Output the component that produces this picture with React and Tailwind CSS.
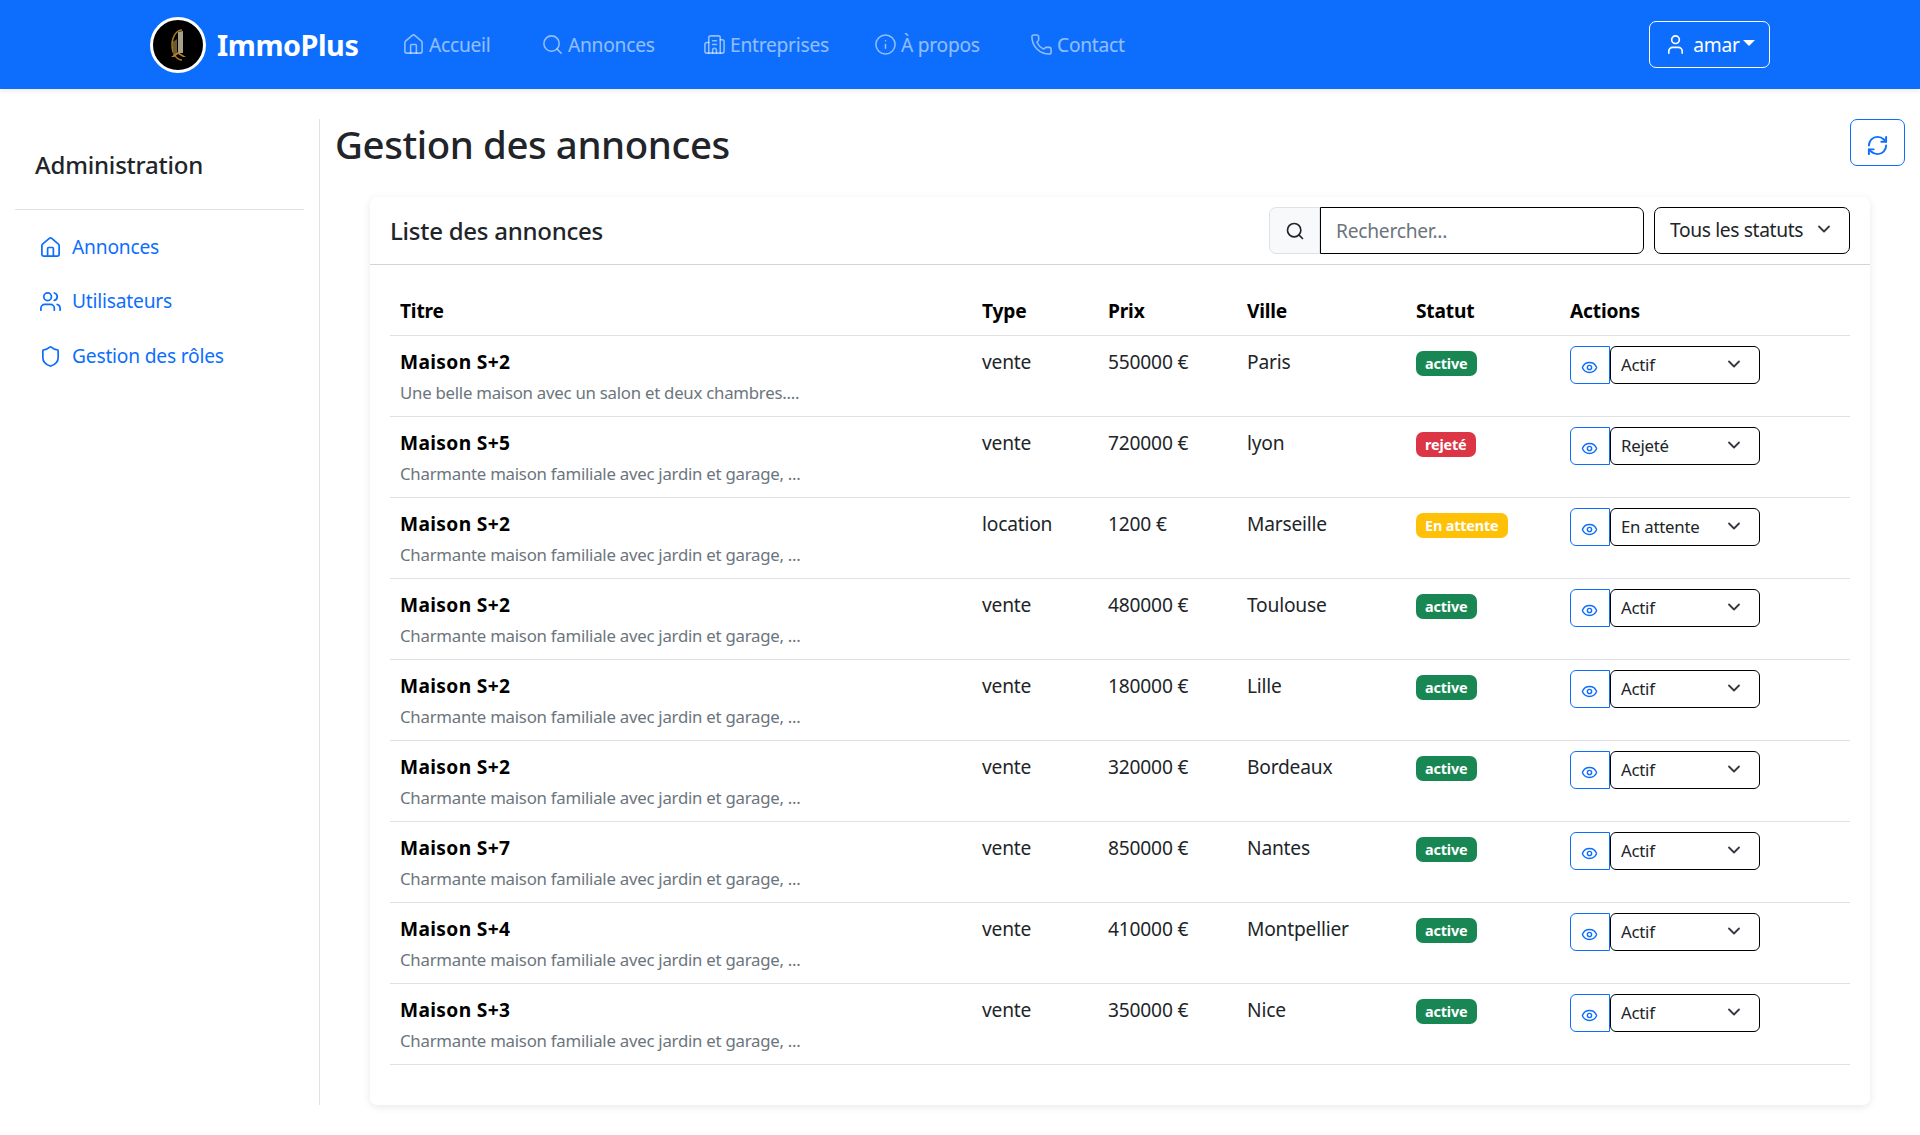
import { Home, Search, Building2, Info, Phone, User, RefreshCw, Users, Shield, Eye, ChevronDown } from "lucide-react";

const font = { fontFamily: '"Noto Sans", sans-serif' };

const navLinks = [
  { label: "Accueil", Icon: Home, cls: "w-[139px]" },
  { label: "Annonces", Icon: Search, cls: "w-[162px]" },
  { label: "Entreprises", Icon: Building2, cls: "w-[171px]" },
  { label: "À propos", Icon: Info, cls: "w-[156px]" },
  { label: "Contact", Icon: Phone, cls: "w-[130px]" },
];

const longDesc = "Charmante maison familiale avec jardin et garage, ...";

const rows = [
  { title: "Maison S+2", desc: "Une belle maison avec un salon et deux chambres....", type: "vente", price: "550000 €", city: "Paris", status: "active", action: "Actif" },
  { title: "Maison S+5", desc: longDesc, type: "vente", price: "720000 €", city: "lyon", status: "rejeté", action: "Rejeté" },
  { title: "Maison S+2", desc: longDesc, type: "location", price: "1200 €", city: "Marseille", status: "En attente", action: "En attente" },
  { title: "Maison S+2", desc: longDesc, type: "vente", price: "480000 €", city: "Toulouse", status: "active", action: "Actif" },
  { title: "Maison S+2", desc: longDesc, type: "vente", price: "180000 €", city: "Lille", status: "active", action: "Actif" },
  { title: "Maison S+2", desc: longDesc, type: "vente", price: "320000 €", city: "Bordeaux", status: "active", action: "Actif" },
  { title: "Maison S+7", desc: longDesc, type: "vente", price: "850000 €", city: "Nantes", status: "active", action: "Actif" },
  { title: "Maison S+4", desc: longDesc, type: "vente", price: "410000 €", city: "Montpellier", status: "active", action: "Actif" },
  { title: "Maison S+3", desc: longDesc, type: "vente", price: "350000 €", city: "Nice", status: "active", action: "Actif" },
];

function badgeClass(status) {
  if (status === "rejeté") return "bg-[#dc3545]";
  if (status === "En attente") return "bg-[#ffc107]";
  return "bg-[#198754]";
}

function Logo() {
  return (
    <svg width="56" height="56" viewBox="0 0 56 56" className="shrink-0">
      <circle cx="28" cy="28" r="26.5" fill="#000" stroke="#fff" strokeWidth="3" />
      <path d="M32 13 A10 15 0 1 0 32 43" fill="none" stroke="#a87a1e" strokeWidth="1.5" />
      <path d="M28 15 L33 14 L33 36 L28 36 Z" fill="#a9a08c" />
      <path d="M23 25 L27 22 L27 37 L23 37 Z" fill="#6e5a30" />
      <path d="M21 40 L28 35 L36 40 L33 40 L28 37 L24 40 Z" fill="#b8862b" />
    </svg>
  );
}

function Navbar() {
  return (
    <nav className="h-[89px] bg-[#0d6efd] flex items-center pl-[150px] pr-[150px] shadow-[0_2px_5px_rgba(0,0,0,0.08)]">
      <Logo />
      <span className="ml-[11px] w-[185px] text-[28.8px] font-bold text-white tracking-[-0.45px]">ImmoPlus</span>
      {navLinks.map(({ label, Icon, cls }) => (
        <a key={label} className={`${cls} flex items-center gap-[4px] text-[19.2px] text-white/55 tracking-[-0.25px]`}>
          <Icon size={23} strokeWidth={1.6} />
          <span className="pt-[2px]">{label}</span>
        </a>
      ))}
      <button className="ml-auto h-[47px] w-[121px] rounded-[7px] border border-white text-white text-[19.2px] flex items-center justify-center gap-[6px] tracking-[-0.2px]">
        <User size={23} strokeWidth={1.7} />
        <span className="pt-[2px]">amar</span>
        <span className="-ml-[3px] mt-[-3px] border-x-[6px] border-t-[6px] border-x-transparent border-t-white" />
      </button>
    </nav>
  );
}

function Sidebar() {
  const links = [
    { label: "Annonces", Icon: Home },
    { label: "Utilisateurs", Icon: Users },
    { label: "Gestion des rôles", Icon: Shield },
  ];
  return (
    <aside className="w-[320px] shrink-0 border-r border-[#dee2e6] px-[15px] pt-[28px]">
      <h2 className="pl-[20px] text-[24px] leading-[36px] font-medium text-[#212529] tracking-[-0.2px]">Administration</h2>
      <hr className="mt-[26px] border-[#dee2e6]" />
      <ul className="mt-[10px] flex flex-col">
        {links.map(({ label, Icon }) => (
          <li key={label} className="h-[54.5px] pl-[24px] flex items-center gap-[10px] text-[19.2px] text-[#0d6efd] tracking-[-0.2px]">
            <Icon size={23} strokeWidth={1.8} />
            {label}
          </li>
        ))}
      </ul>
    </aside>
  );
}

function Row({ row }) {
  return (
    <tr className="h-[81px] border-b border-[#dee2e6] align-top text-[19.2px] text-[#212529] tracking-[-0.2px]">
      <td className="px-[10px] pt-[11px]">
        <div className="font-bold text-black leading-[29px] tracking-[0.35px]">{row.title}</div>
        <div className="text-[16.8px] text-[#6c757d] leading-[25px] mt-[4px] tracking-[-0.25px]">{row.desc}</div>
      </td>
      <td className="px-[10px] pt-[11px] leading-[29px]">{row.type}</td>
      <td className="px-[10px] pt-[11px] leading-[29px]">{row.price}</td>
      <td className="px-[10px] pt-[11px] leading-[29px]">{row.city}</td>
      <td className="px-[10px] pt-[15px]">
        <span className={`${badgeClass(row.status)} flex w-fit h-[25px] px-[9px] rounded-[7px] text-white text-[14.4px] font-bold leading-[25px] tracking-[-0.15px]`}>
          {row.status}
        </span>
      </td>
      <td className="px-[10px] pt-[10px]">
        <div className="flex">
          <button className="w-[40px] h-[38px] flex items-center justify-center pt-[5px] pr-[1px] rounded-l-[6px] border border-[#0d6efd] text-[#0d6efd]">
            <Eye size={17} strokeWidth={2} />
          </button>
          <div className="relative w-[150px] h-[38px]">
            <select
              defaultValue={row.action}
              className="appearance-none w-full h-full rounded-[6px] border border-black bg-white pl-[10px] text-[16.8px] text-[#212529] tracking-[-0.25px]"
            >
              <option>{row.action}</option>
            </select>
            <ChevronDown size={20} strokeWidth={2.2} className="absolute right-[16px] top-[8px] text-[#343a40] pointer-events-none" />
          </div>
        </div>
      </td>
    </tr>
  );
}

function Listing() {
  return (
    <section className="ml-[50px] mt-[24px] w-[1500px] h-[908px] rounded-[7px] bg-white shadow-[0_2px_8px_rgba(0,0,0,0.09)]">
      <header className="h-[68px] border-b border-[#d3d6d9] pl-[20px] pr-[20px] flex items-center">
        <h3 className="text-[24px] font-medium text-[#212529] tracking-[-0.25px]">Liste des annonces</h3>
        <div className="ml-auto flex items-center">
          <span className="w-[51px] h-[47px] flex items-center justify-center rounded-l-[7px] border border-[#dee2e6] bg-[#f8f9fa] text-[#212529]">
            <Search size={20} strokeWidth={2} />
          </span>
          <input
            placeholder="Rechercher..."
            className="w-[324px] h-[47px] rounded-r-[7px] border border-black bg-white pl-[15px] text-[19.2px] tracking-[-0.25px] placeholder:text-[#6c757d] outline-none"
          />
          <div className="relative ml-[10px] w-[196px] h-[47px]">
            <select className="appearance-none w-full h-full rounded-[7px] border border-black bg-white pl-[15px] text-[19.2px] text-[#212529] tracking-[-0.35px]">
              <option>Tous les statuts</option>
            </select>
            <ChevronDown size={20} strokeWidth={2.2} className="absolute right-[16px] top-[12px] text-[#343a40] pointer-events-none" />
          </div>
        </div>
      </header>
      <div className="px-[20px] pt-[18px]">
        <table className="w-[1460px] table-fixed border-collapse">
          <colgroup>
            <col className="w-[582px]" />
            <col className="w-[126px]" />
            <col className="w-[139px]" />
            <col className="w-[169px]" />
            <col className="w-[154px]" />
            <col className="w-[290px]" />
          </colgroup>
          <thead>
            <tr className="h-[52px] border-b border-[#dee2e6] text-left text-[19.2px] font-bold text-black tracking-[-0.2px]">
              {["Titre", "Type", "Prix", "Ville", "Statut", "Actions"].map((h) => (
                <th key={h} className="px-[10px] pt-[6px]">{h}</th>
              ))}
            </tr>
          </thead>
          <tbody>
            {rows.map((row, i) => (
              <Row key={i} row={row} />
            ))}
          </tbody>
        </table>
      </div>
    </section>
  );
}

export default function App() {
  return (
    <div style={font} className="min-h-[1135px] bg-white">
      <Navbar />
      <div className="flex mt-[30px] h-[986px]">
        <Sidebar />
        <main className="flex-1 pl-[15px] pr-[15px]">
          <div className="flex items-start justify-between">
            <h1 className="h-[54px] text-[38.4px] leading-[51px] font-medium text-[#212529] tracking-[-0.4px]">Gestion des annonces</h1>
            <button className="w-[55px] h-[47px] pt-[6px] rounded-[7px] border border-[#0d6efd] text-[#0d6efd] flex items-center justify-center">
              <RefreshCw size={23} strokeWidth={2} />
            </button>
          </div>
          <div className="-ml-[15px]">
            <Listing />
          </div>
        </main>
      </div>
    </div>
  );
}
